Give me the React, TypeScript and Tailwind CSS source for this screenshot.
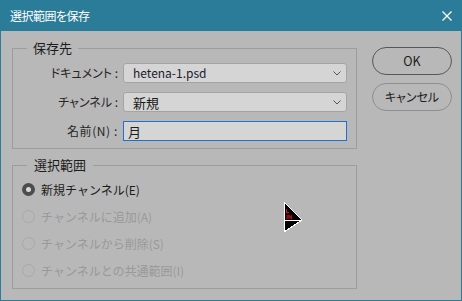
import React from "react";

const jp = "font-['Noto_Sans_CJK_JP','Noto_Sans',sans-serif]";
const palt = "[font-feature-settings:'palt']";

function Chevron() {
  return (
    <svg width="8" height="5" viewBox="0 0 8 5" className="shrink-0">
      <path d="M0.5 0.5 L4 4 L7.5 0.5" fill="none" stroke="#555" strokeWidth="1" />
    </svg>
  );
}

function Select({ value, latin }: { value: string; latin?: boolean }) {
  return (
    <div className="w-[224px] h-[20px] rounded-[3px] border border-[#a4a4a4] bg-[#d5d5d5] flex items-center justify-between pl-[9px] pr-[5px]">
      <span className={latin ? "text-[12px] leading-none text-[#1b1b2e]" : "text-[13px] leading-none text-[#1b1b1b]"}>
        {value}
      </span>
      <Chevron />
    </div>
  );
}

function Row({ label, wide, children }: { label: React.ReactNode; wide?: boolean; children: React.ReactNode }) {
  return (
    <div className="flex items-center h-[20px]">
      <span
        className={
          "w-[105px] text-right text-[12px] leading-none text-[#262626] whitespace-nowrap " +
          palt +
          (wide ? " tracking-[0.6px]" : "")
        }
      >
        {label}
      </span>
      <div className="ml-[5px]">{children}</div>
    </div>
  );
}

function Radio({ label, checked, disabled }: { label: string; checked?: boolean; disabled?: boolean }) {
  return (
    <div className="h-[27px] flex items-center pl-[9px]">
      {checked ? (
        <span className="w-[13px] h-[13px] rounded-full bg-[#4d4d4d] flex items-center justify-center">
          <span className="w-[5px] h-[5px] rounded-full bg-[#d9d9d9]" />
        </span>
      ) : (
        <span className="w-[13px] h-[13px] rounded-full border border-[#a9a9a9]" />
      )}
      <span
        className={
          "ml-[6px] text-[12px] leading-none whitespace-nowrap " + (disabled ? "text-[#999999]" : "text-[#1c1c1c]")
        }
      >
        {label}
      </span>
    </div>
  );
}

function Cursor() {
  return (
    <svg
      width="22"
      height="32"
      viewBox="0 0 22 32"
      className="absolute left-[280px] top-[170px]"
      shapeRendering="crispEdges"
    >
      <polygon points="3,1 21,19 3,31" fill="#000" stroke="#fff" strokeWidth="1" />
      <line x1="3" y1="19.5" x2="20" y2="19.5" stroke="#fff" strokeWidth="1" />
      <rect x="5" y="8" width="1" height="4" fill="#e01010" />
      <rect x="5" y="11" width="3" height="1" fill="#e01010" />
      <text x="5" y="17.5" fontSize="6" fontWeight="700" fill="#e01010" fontFamily="Liberation Sans, sans-serif">
        IN
      </text>
    </svg>
  );
}

export default function App() {
  return (
    <div className={"w-[462px] h-[301px] bg-[#2b7c99] flex flex-col " + jp}>
      <div className="h-[31px] flex items-center justify-between pl-[10px] pr-[10px] shrink-0">
        <span className={"text-white text-[12px] leading-none tracking-[-0.5px] " + palt}>選択範囲を保存</span>
        <svg width="10" height="10" viewBox="0 0 10 10">
          <path d="M0.5 0.5 L9.5 9.5 M9.5 0.5 L0.5 9.5" stroke="#fff" strokeWidth="1.3" />
        </svg>
      </div>
      <div className="flex-1 mx-px mb-px bg-[#b8b8b8] flex relative">
        <div className="pl-[11px] pt-[8px] flex flex-col">
          <fieldset className="w-[345px] border border-[#9d9d9d] pt-[6px] pb-[7px]">
            <legend className="ml-[14px] px-[6px] text-[13px] leading-[18px] text-[#1c1c1c]">保存先</legend>
            <div className="flex flex-col gap-[9px]">
              <Row label="ドキュメント :">
                <Select value="hetena-1.psd" latin />
              </Row>
              <Row label="チャンネル :">
                <Select value="新規" />
              </Row>
              <Row label="名前(N) :" wide>
                <div className="w-[224px] h-[20px] border border-[#1e72cf] bg-[#d5d5d5] flex items-center pl-[4px]">
                  <span className="text-[13px] leading-none text-[#1b1b1b]">月</span>
                </div>
              </Row>
            </div>
          </fieldset>
          <fieldset className="mt-[7px] w-[345px] border border-[#9d9d9d] pt-[2px] pb-[4px]">
            <legend className="ml-[14px] px-[7px] text-[13px] leading-[18px] text-[#1c1c1c]">選択範囲</legend>
            <Radio label="新規チャンネル(E)" checked />
            <Radio label="チャンネルに追加(A)" disabled />
            <Radio label="チャンネルから削除(S)" disabled />
            <Radio label="チャンネルとの共通範囲(I)" disabled />
          </fieldset>
        </div>
        <div className="ml-[15px] pt-[16px] flex flex-col gap-[8px]">
          <button className="w-[80px] h-[28px] rounded-full border border-[#575757] text-[12.5px] leading-none text-[#1c1c1c]">
            OK
          </button>
          <button
            className={
              "w-[80px] h-[28px] rounded-full border border-[#8e8e8e] text-[12px] leading-none text-[#1c1c1c] " + palt
            }
          >
            キャンセル
          </button>
        </div>
        <Cursor />
      </div>
    </div>
  );
}
